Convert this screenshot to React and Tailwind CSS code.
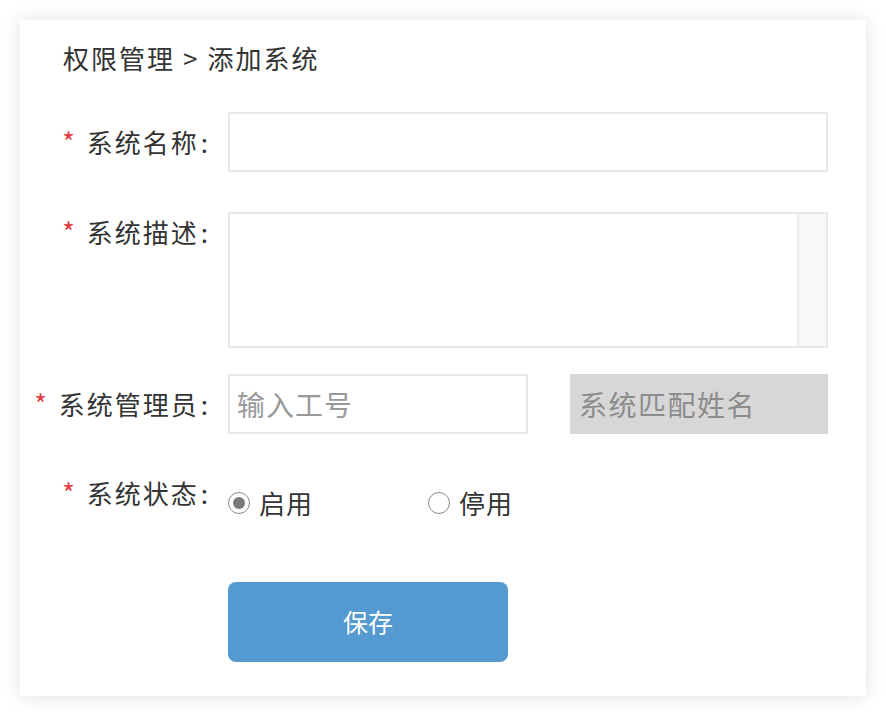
import { useState } from "react";

const font = {
  fontFamily: '"Noto Sans CJK SC", "Noto Sans", sans-serif',
};

function Label({ children }) {
  return (
    <div className="w-[190px] shrink-0 text-right text-[26px] leading-[36px] tracking-[2px] text-[#333]">
      <span className="mr-[10px] text-[27px] text-[#e4393c]">*</span>
      {children}
      <span className="ml-[2px]">:</span>
    </div>
  );
}

function Radio({ checked, label, onClick }) {
  return (
    <button type="button" onClick={onClick} className="flex items-center gap-[9px] text-[26px] leading-[36px] tracking-[1px] text-[#333]">
      <span className="flex h-[22px] w-[22px] items-center justify-center rounded-full border-[1.5px] border-[#8c8c8c] bg-white">
        {checked && <span className="h-[12px] w-[12px] rounded-full bg-[#7a7a7a]" />}
      </span>
      {label}
    </button>
  );
}

export default function App() {
  const [status, setStatus] = useState("on");

  return (
    <div className="min-h-[716px] bg-white pt-[20px] pl-[20px]" style={font}>
      <div className="h-[676px] w-[846px] bg-white pt-[20px] shadow-[0_0_18px_rgba(0,0,0,0.12)]">
        {/* 面包屑 */}
        <div className="pl-[43px] text-[26px] leading-[36px] tracking-[2px] text-[#333]">
          权限管理<span className="mx-[8px]">&gt;</span>添加系统
        </div>

        {/* 系统名称 */}
        <div className="mt-[36px] flex items-center gap-[18px]">
          <Label>系统名称</Label>
          <input className="h-[60px] w-[600px] border-2 border-[#e8e8e8] px-[8px] text-[26px] outline-none" />
        </div>

        {/* 系统描述 */}
        <div className="mt-[40px] flex items-start gap-[18px]">
          <div className="pt-[2px]">
            <Label>系统描述</Label>
          </div>
          <div className="flex h-[136px] w-[600px] border-2 border-[#e8e8e8]">
            <textarea className="flex-1 resize-none p-[8px] text-[26px] outline-none" />
            <div className="w-[29px] border-l-2 border-[#ececec] bg-[#f8f8f8]" />
          </div>
        </div>

        {/* 系统管理员 */}
        <div className="mt-[26px] flex items-center gap-[18px]">
          <Label>系统管理员</Label>
          <input
            placeholder="输入工号"
            className="h-[60px] w-[300px] border-2 border-[#e8e8e8] px-[7px] text-[28px] tracking-[1px] outline-none placeholder:text-[#999]"
          />
          <div className="ml-[24px] flex h-[60px] w-[258px] items-center bg-[#d7d7d7] px-[9px] text-[28px] tracking-[1.5px] text-[#8c8c8c]">
            系统匹配姓名
          </div>
        </div>

        {/* 系统状态 */}
        <div className="mt-[41px] flex items-start gap-[18px]">
          <Label>系统状态</Label>
          <div className="mt-[10px] flex items-center">
            <div className="w-[200px]">
              <Radio checked={status === "on"} label="启用" onClick={() => setStatus("on")} />
            </div>
            <Radio checked={status === "off"} label="停用" onClick={() => setStatus("off")} />
          </div>
        </div>

        {/* 保存 */}
        <div className="mt-[61px] pl-[208px]">
          <button type="button" className="h-[80px] w-[280px] rounded-[8px] bg-[#5499cf] text-[25px] text-white">
            保存
          </button>
        </div>
      </div>
    </div>
  );
}
